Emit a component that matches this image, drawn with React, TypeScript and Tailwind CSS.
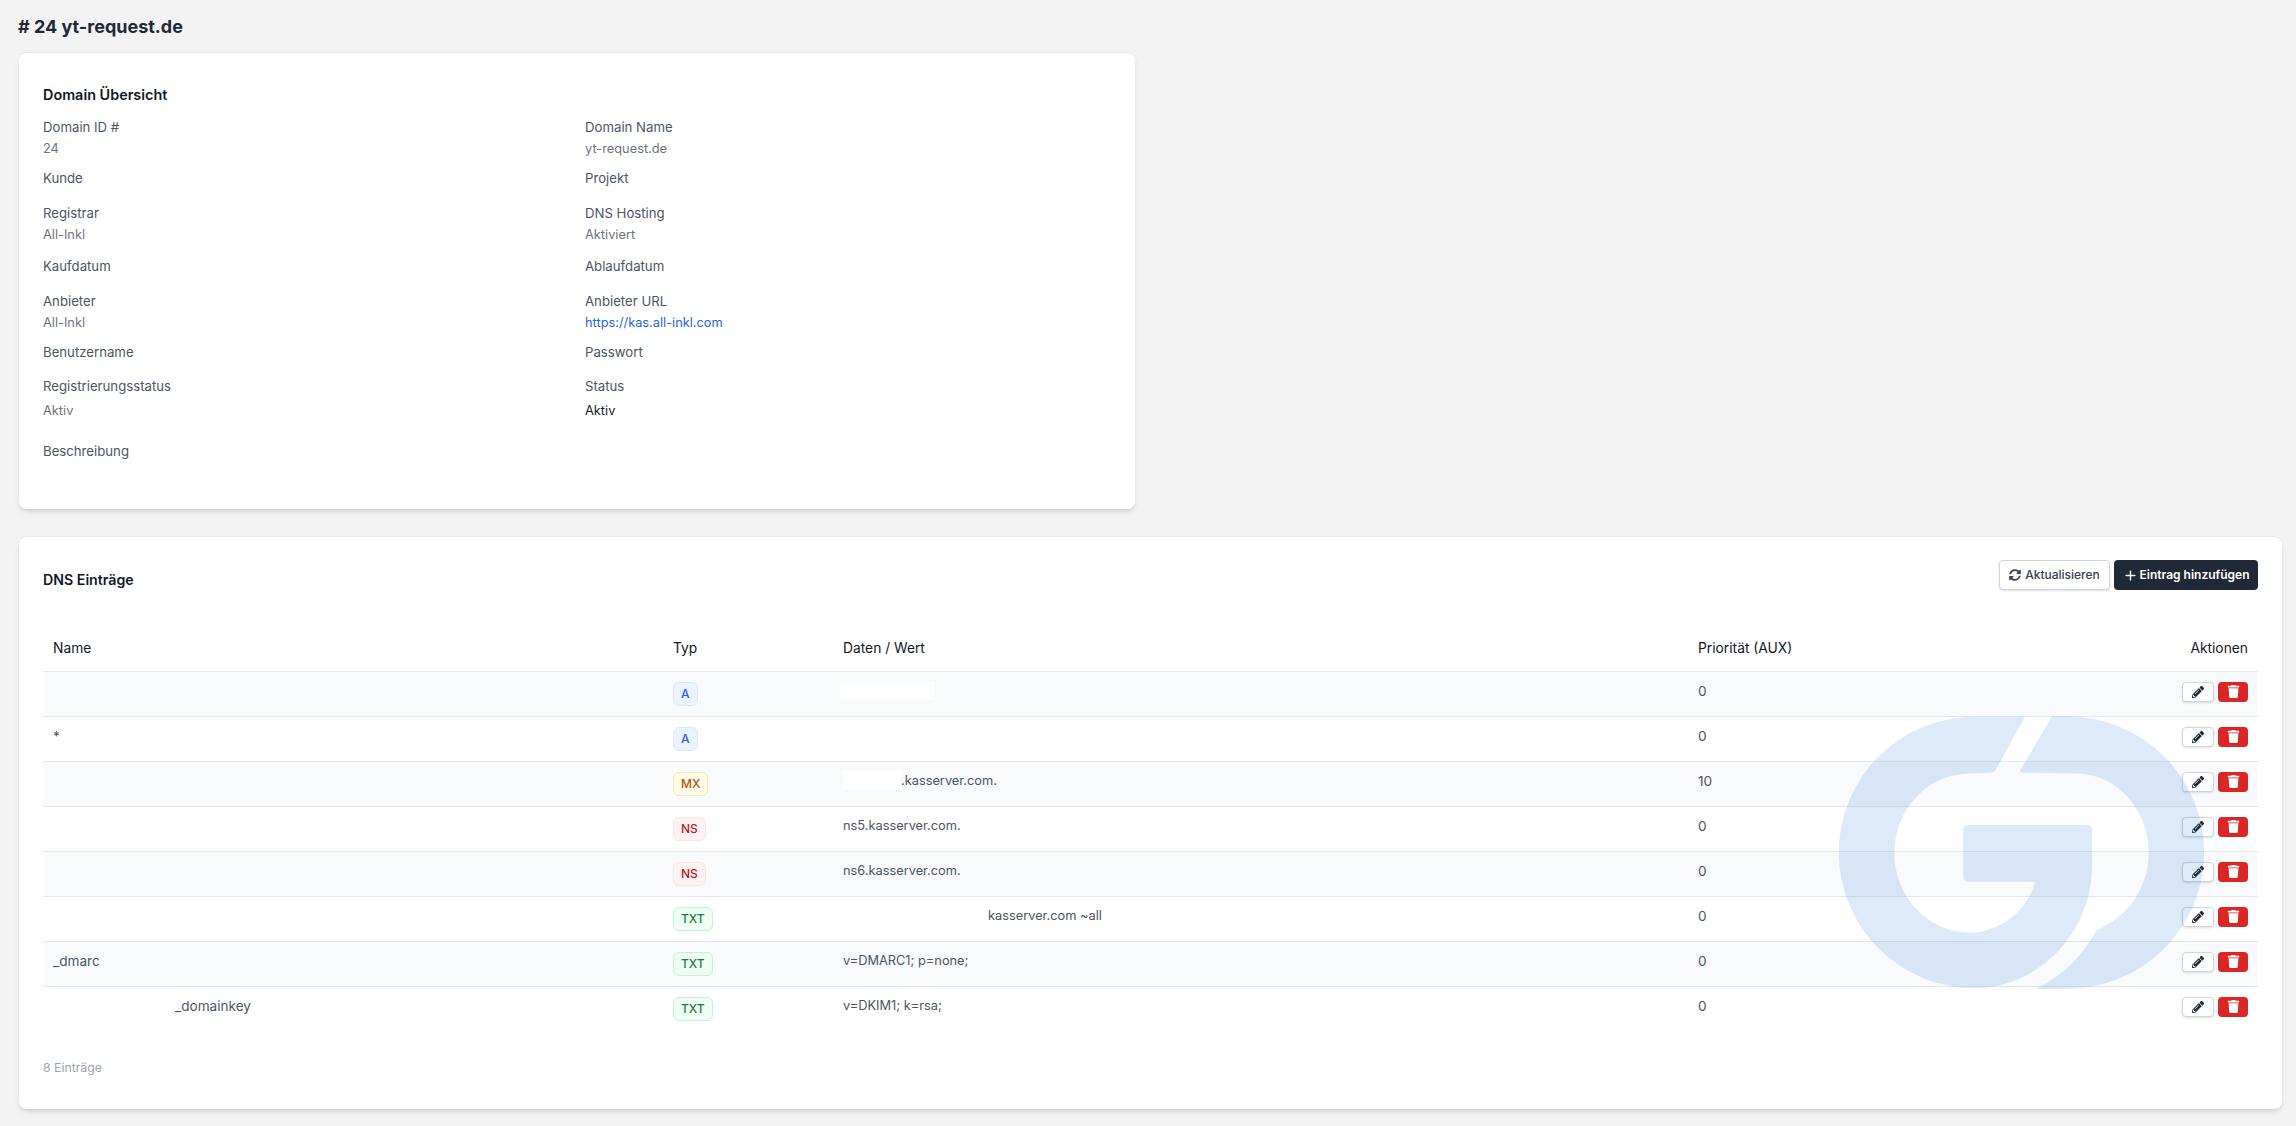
import React from "react";
import { FaPencilAlt, FaSyncAlt, FaTrash } from "react-icons/fa";
import { Plus } from "lucide-react";

interface IField {
    label: string;
    value?: string;
    kind?: "link" | "dark";
    spaced?: boolean;
}

interface IRecord {
    name: string;
    nameIndent?: boolean;
    type: "A" | "MX" | "NS" | "TXT";
    data: string;
    dataIndent?: boolean;
    maskWidth?: string;
    maskShift?: boolean;
    priority: string;
}

const fieldRows: { height: string; left: IField; right: IField }[] = [
    { height: "h-[51px]", left: { label: "Domain ID #", value: "24" }, right: { label: "Domain Name", value: "yt-request.de" } },
    { height: "h-[35px]", left: { label: "Kunde" }, right: { label: "Projekt" } },
    { height: "h-[53px]", left: { label: "Registrar", value: "All-Inkl" }, right: { label: "DNS Hosting", value: "Aktiviert" } },
    { height: "h-[35px]", left: { label: "Kaufdatum" }, right: { label: "Ablaufdatum" } },
    { height: "h-[51px]", left: { label: "Anbieter", value: "All-Inkl" }, right: { label: "Anbieter URL", value: "https://kas.all-inkl.com", kind: "link" } },
    { height: "h-[34px]", left: { label: "Benutzername" }, right: { label: "Passwort" } },
    {
        height: "h-[65px]",
        left: { label: "Registrierungsstatus", value: "Aktiv", spaced: true },
        right: { label: "Status", value: "Aktiv", kind: "dark", spaced: true },
    },
];

const records: IRecord[] = [
    { name: "", type: "A", data: "", maskWidth: "w-[94px]", maskShift: true, priority: "0" },
    { name: "*", type: "A", data: "", priority: "0" },
    { name: "", type: "MX", data: ".kasserver.com.", maskWidth: "w-[58px]", priority: "10" },
    { name: "", type: "NS", data: "ns5.kasserver.com.", priority: "0" },
    { name: "", type: "NS", data: "ns6.kasserver.com.", priority: "0" },
    { name: "", type: "TXT", data: "kasserver.com ~all", dataIndent: true, priority: "0" },
    { name: "_dmarc", type: "TXT", data: "v=DMARC1; p=none;", priority: "0" },
    { name: "_domainkey", nameIndent: true, type: "TXT", data: "v=DKIM1; k=rsa;", priority: "0" },
];

const badgeStyles = {
    A: "bg-[#ebf3fe] border-[#dbe7fb] text-[#2563eb]",
    MX: "bg-[#fefbe8] border-[#fae8b0] text-[#b45309]",
    NS: "bg-[#fef2f2] border-[#fee2e2] text-[#b91c1c]",
    TXT: "bg-[#f0fdf4] border-[#bbf7d0] text-[#15803d]",
};

function Field({ label, value, kind, spaced }: IField) {
    return (
        <div>
            <div className="text-[13.2px] leading-[20px] text-[#4b5563]">{label}</div>
            {value ? (
                <div
                    className={`${spaced ? "mt-[5px]" : "mt-[2px]"} text-[12.8px] leading-[20px] ${
                        kind === "link" ? "text-[#2563eb]" : kind === "dark" ? "text-[#111827]" : "text-[#6b7280]"
                    }`}
                >
                    {value}
                </div>
            ) : null}
        </div>
    );
}

function Logo() {
    return (
        <svg
            className="absolute left-[1820px] top-[179px] w-[365px] h-[274px] pointer-events-none"
            viewBox="117 43 1096 822"
            fill="#1d6fdc"
            fillOpacity="0.15"
        >
            <path d="M675 45 L590 200 Q583 213 570 213 L510 215 A226 238 0 0 0 510 693 C600 693 680 630 707 540 L505 540 Q490 540 490 525 L490 385 Q490 370 505 370 L862 370 Q877 370 877 385 L877 490 C877 700 710 860 524 860 A407 407 0 0 1 524 45 Z" />
            <path d="M757 43 L662 205 Q657 213 670 213 L830 215 A217 240 0 0 1 1047 455 C1047 560 980 650 890 685 C850 760 790 825 705 862 L800 862 A413 409 0 0 0 800 43 Z" />
        </svg>
    );
}

export default function App() {
    return (
        <div className="min-h-[1126px] bg-[#f3f3f3] pl-[19px] pr-[14px] pt-[15px] font-['Inter',sans-serif]">
            <h1 className="-ml-px text-[18px] leading-[24px] font-bold text-[#1f2937]"># 24 yt-request.de</h1>

            <div className="mt-[13px] w-[1116px] h-[457px] rounded-lg bg-white shadow-md border-t border-[#e5e7eb] px-[24px] pt-[32px]">
                <h2 className="text-[14.4px] leading-[20px] font-semibold text-[#111827]">Domain Übersicht</h2>
                <div className="mt-[12px]">
                    {fieldRows.map((row) => (
                        <div key={row.left.label} className={`grid grid-cols-[542px_1fr] ${row.height}`}>
                            <Field {...row.left} />
                            <Field {...row.right} />
                        </div>
                    ))}
                </div>
                <div className="text-[13.2px] leading-[20px] text-[#4b5563]">Beschreibung</div>
            </div>

            <div className="relative mt-[27px] w-[2263px] h-[573px] rounded-lg bg-white shadow-md border-t border-[#e5e7eb] px-[24px] pt-[23px]">
                <div className="flex items-center justify-between h-[30px]">
                    <h2 className="mt-[10px] text-[14.2px] leading-[20px] font-semibold text-[#111827]">DNS Einträge</h2>
                    <div className="flex gap-[4px]">
                        <button className="flex items-center justify-center gap-[4px] w-[111px] h-[30px] rounded border border-[#d1d5db] bg-white text-[12px] font-medium text-[#374151] shadow-sm">
                            <FaSyncAlt className="w-[12px] h-[12px]" />
                            Aktualisieren
                        </button>
                        <button className="flex items-center justify-center gap-[2px] w-[144px] h-[30px] rounded bg-[#1f2937] text-[12px] font-semibold text-white">
                            <Plus className="w-[15px] h-[15px]" strokeWidth={2.2} />
                            Eintrag hinzufügen
                        </button>
                    </div>
                </div>

                <table className="mt-[36px] w-[2215px] table-fixed border-collapse">
                    <thead>
                        <tr className="h-[45px] border-b border-[#e5e7eb] text-left text-[13.8px] text-[#111827]">
                            <th className="w-[620px] px-[10px] font-normal">Name</th>
                            <th className="w-[170px] px-[10px] font-normal">Typ</th>
                            <th className="w-[855px] px-[10px] font-normal">Daten / Wert</th>
                            <th className="px-[10px] font-normal">Priorität (AUX)</th>
                            <th className="w-[200px] px-[10px] text-right font-normal">Aktionen</th>
                        </tr>
                    </thead>
                    <tbody>
                        {records.map((record, index) => (
                            <tr
                                key={index}
                                className={`h-[45px] border-b border-[#e5e7eb] leading-[20px] text-[#4b5563] ${
                                    index % 2 === 0 ? "bg-[#f9fafb]" : "bg-white"
                                } last:border-b-0`}
                            >
                                <td className={`align-top pt-[9px] px-[10px] text-[13.6px] ${record.nameIndent ? "pl-[132px]" : ""}`}>
                                    {record.name}
                                </td>
                                <td className="align-top pt-[10px] px-[10px]">
                                    <span
                                        className={`block w-fit h-[24px] rounded-md border px-[7px] text-[12px] leading-[22px] font-medium ${badgeStyles[record.type]}`}
                                    >
                                        {record.type}
                                    </span>
                                </td>
                                <td className={`align-top pt-[9px] px-[10px] text-[12.8px] ${record.dataIndent ? "pl-[155px]" : ""}`}>
                                    {record.maskWidth ? (
                                        <span
                                            className={`inline-block align-top h-[19px] bg-white ${record.maskWidth} ${
                                                record.maskShift ? "-ml-[3px]" : ""
                                            }`}
                                        />
                                    ) : null}
                                    {record.data}
                                </td>
                                <td className="align-top pt-[9px] px-[10px] text-[13.6px]">{record.priority}</td>
                                <td className="align-top pt-[10px] px-[10px]">
                                    <div className="flex justify-end gap-[4px]">
                                        <button className="flex items-center justify-center w-[32px] h-[20px] rounded border border-[#d1d5db] bg-white text-[#1f2937] shadow-sm">
                                            <FaPencilAlt className="w-[12px] h-[12px]" />
                                        </button>
                                        <button className="flex items-center justify-center w-[30px] h-[20px] rounded bg-[#dc2626] text-white">
                                            <FaTrash className="w-[13px] h-[13px]" />
                                        </button>
                                    </div>
                                </td>
                            </tr>
                        ))}
                    </tbody>
                </table>

                <div className="mt-[29px] text-[12.3px] leading-[16px] text-[#9ca3af]">8 Einträge</div>
                <Logo />
            </div>
        </div>
    );
}
